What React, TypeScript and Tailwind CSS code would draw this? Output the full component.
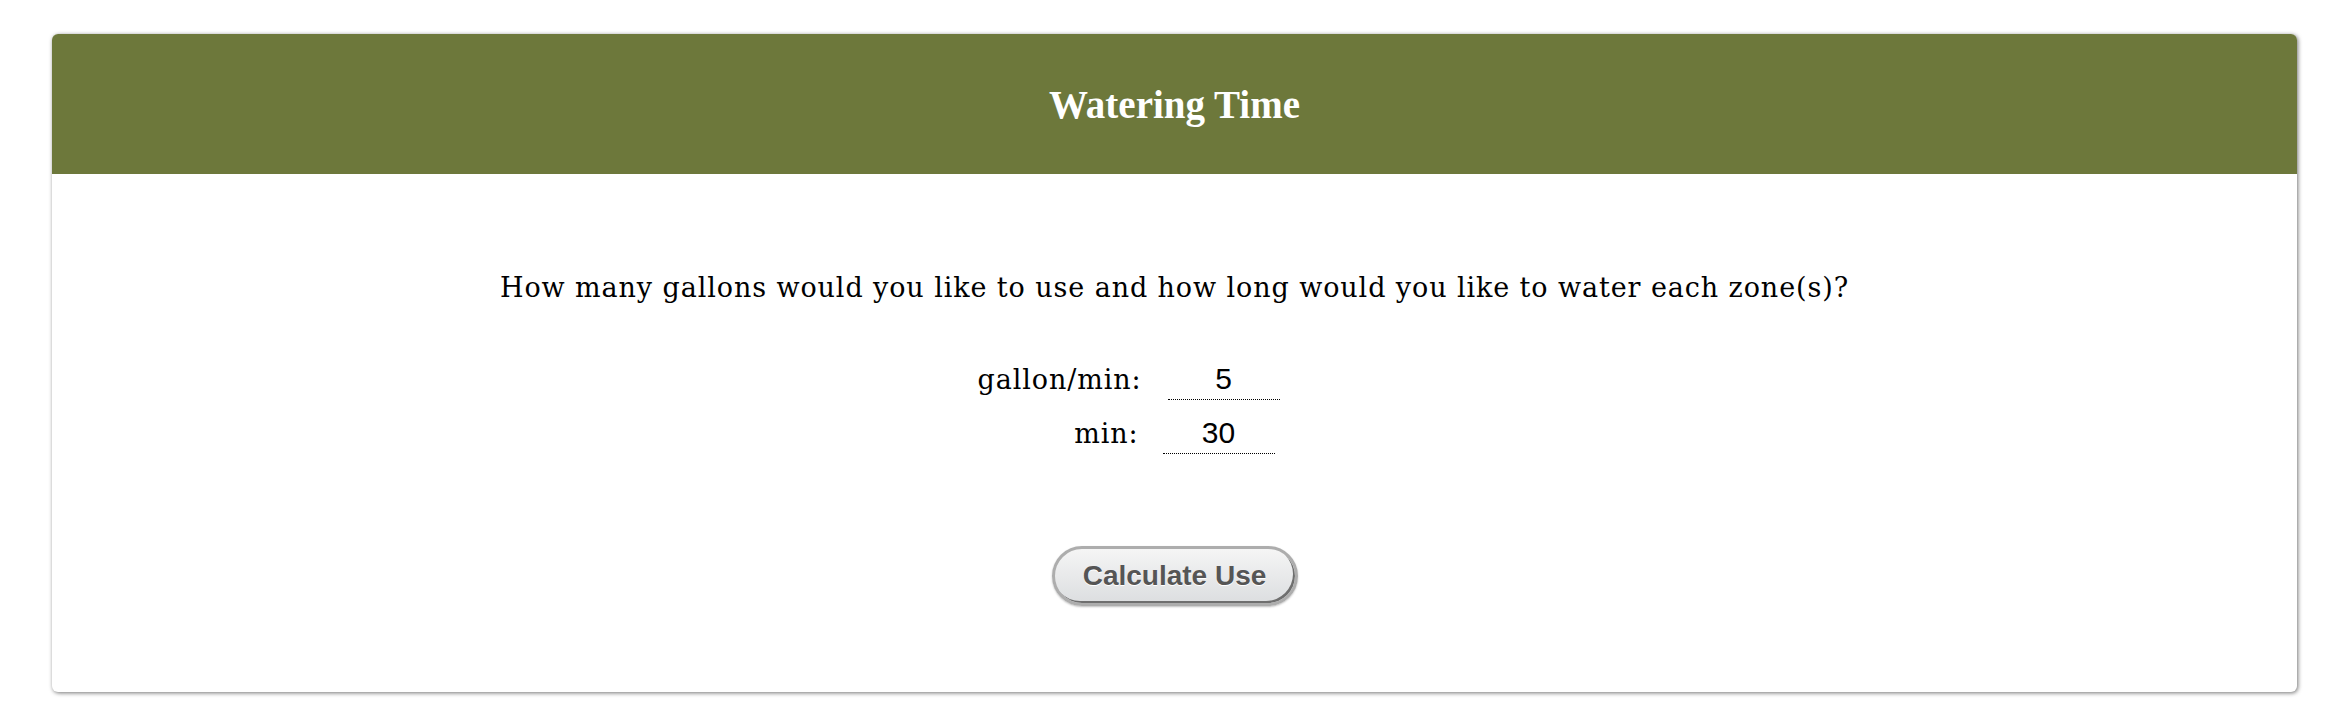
import { useState } from 'react'

const serif = { fontFamily: '"DejaVu Serif", serif' }
const sans = { fontFamily: '"Liberation Sans", Arial, sans-serif' }

export default function App() {
  const [rate, setRate] = useState('5')
  const [mins, setMins] = useState('30')

  return (
    <div className="min-h-screen bg-white pt-[34px] pl-[52px] pr-[53px]">
      <div className="rounded-[6px] bg-white shadow-[1px_1px_4px_rgba(0,0,0,0.55)] overflow-hidden">
        <div className="h-[140px] bg-[#6d783b] flex items-center justify-center">
          <h1
            className="text-white text-[39px] font-bold leading-none"
            style={{ fontFamily: '"Liberation Serif", "Times New Roman", serif' }}
          >
            Watering Time
          </h1>
        </div>

        <div className="pt-[99px] pb-[86px] flex flex-col items-center">
          <p className="text-[27px] leading-[30px] tracking-[0.9px] text-black" style={serif}>
            How many gallons would you like to use and how long would you like to water each zone(s)?
          </p>

          <div className="mt-[55px] flex justify-center pr-[92px] w-full">
            <div className="flex flex-col items-end gap-[12px]">
              <Row label="gallon/min:" value={rate} onChange={setRate} gap="ml-[26px]" />
              <Row label="min:" value={mins} onChange={setMins} gap="ml-[24px]" extra="mr-[5px]" />
            </div>
          </div>

          <button
            className="mt-[92px] h-[60px] w-[246px] rounded-full border-[3px] border-[#adadad] bg-gradient-to-b from-[#f5f5f5] to-[#dcdee0] shadow-[inset_-2px_-2px_0_#6f6f6f,0_1px_2px_rgba(0,0,0,0.25)] text-[28px] font-bold text-[#555555]"
            style={{ ...sans, textShadow: '0 1px 0 #fff' }}
          >
            Calculate Use
          </button>
        </div>
      </div>
    </div>
  )
}

function Row({
  label, value, onChange, gap, extra = '',
}: { label: string; value: string; onChange: (v: string) => void; gap: string; extra?: string }) {
  return (
    <div className={`flex items-baseline ${extra}`}>
      <span className="text-[27px] leading-[30px] tracking-[0.9px] text-black" style={serif}>{label}</span>
      <input
        value={value}
        onChange={e => onChange(e.target.value)}
        className={`${gap} w-[112px] h-[42px] p-0 border-0 border-b border-dotted border-black bg-transparent text-center text-[30px] text-black outline-none`}
        style={sans}
      />
    </div>
  )
}
